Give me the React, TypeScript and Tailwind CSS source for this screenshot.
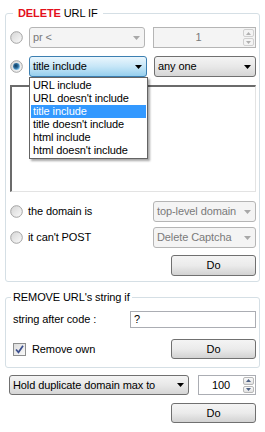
import React from 'react';

type Kind = 'normal' | 'disabled' | 'focus';

const Arrow = ({ gray }: { gray?: boolean }) => (
  <svg width="7" height="4" viewBox="0 0 7 4">
    <path d="M0 0 H7 L3.5 4 Z" fill={gray ? '#a8a8a8' : '#000'} />
  </svg>
);

const Select = ({ text, kind = 'normal', className = '' }: { text: string; kind?: Kind; className?: string }) => {
  const skin =
    kind === 'disabled'
      ? 'border-[#b5b5b5] bg-[#f4f4f4] text-[#7a7a7a]'
      : kind === 'focus'
        ? 'border-[#3c7fb1] bg-linear-to-b from-[#eaf6fd] via-[#c6e6f7] to-[#95cfee] text-black'
        : 'border-[#707070] bg-linear-to-b from-[#f4f4f4] via-[#e8e8e8] to-[#d6d6d6] text-black';
  return (
    <div className={`h-full flex items-center rounded-[3px] border ${skin} ${className}`}>
      <span className="flex-1 pl-[3px] truncate">{text}</span>
      <span className="w-[16px] flex justify-center">
        <Arrow gray={kind === 'disabled'} />
      </span>
    </div>
  );
};

const Tri = ({ up, gray }: { up?: boolean; gray?: boolean }) => (
  <svg width="5" height="3" viewBox="0 0 5 3">
    <path d={up ? 'M0 3 H5 L2.5 0 Z' : 'M0 0 H5 L2.5 3 Z'} fill={gray ? '#b0b0b0' : '#4d6185'} />
  </svg>
);

const Spin = ({ value, disabled, className = '' }: { value: string; disabled?: boolean; className?: string }) => (
  <div
    className={`h-full flex items-center border ${
      disabled ? 'border-[#b5b5b5] bg-[#f4f4f4] text-[#7a7a7a]' : 'border-[#abadb3] bg-white text-black'
    } ${className}`}
  >
    <span className="flex-1 text-center">{value}</span>
    <div className="w-[12px] h-full flex flex-col py-[1px] pr-[1px] gap-[1px]">
      <div
        className={`flex-1 flex items-center justify-center rounded-[2px] border ${
          disabled ? 'border-[#d0d0d0] bg-[#f4f4f4]' : 'border-[#b8b8b8] bg-linear-to-b from-[#fafafa] to-[#e2e2e2]'
        }`}
      >
        <Tri up gray={disabled} />
      </div>
      <div
        className={`flex-1 flex items-center justify-center rounded-[2px] border ${
          disabled ? 'border-[#d0d0d0] bg-[#f4f4f4]' : 'border-[#b8b8b8] bg-linear-to-b from-[#fafafa] to-[#e2e2e2]'
        }`}
      >
        <Tri gray={disabled} />
      </div>
    </div>
  </div>
);

const Radio = ({ on }: { on?: boolean }) => (
  <svg width="13" height="13" viewBox="0 0 13 13">
    <defs>
      <linearGradient id="rg" x1="0" y1="0" x2="1" y2="1">
        <stop offset="0" stopColor="#d4d4d4" />
        <stop offset="1" stopColor="#fbfbfb" />
      </linearGradient>
      <radialGradient id="rd" cx="0.4" cy="0.4" r="0.6">
        <stop offset="0" stopColor="#0d3a5e" />
        <stop offset="0.6" stopColor="#2e6f9e" />
        <stop offset="1" stopColor="#7ec0ea" />
      </radialGradient>
    </defs>
    <circle cx="6.5" cy="6.5" r="5.8" fill="url(#rg)" stroke="#a3a3a3" strokeWidth="1" />
    {on && <circle cx="6.5" cy="6.5" r="3.4" fill="url(#rd)" />}
  </svg>
);

const Check = () => (
  <svg width="13" height="13" viewBox="0 0 13 13">
    <defs>
      <linearGradient id="cg" x1="0" y1="0" x2="1" y2="1">
        <stop offset="0" stopColor="#dcdcdc" />
        <stop offset="1" stopColor="#fafafa" />
      </linearGradient>
    </defs>
    <rect x="0.5" y="0.5" width="12" height="12" fill="url(#cg)" stroke="#8e8f8f" />
    <path d="M3 6.5 L5.5 9.3 L10 2.8" fill="none" stroke="#3b4f8e" strokeWidth="1.7" />
  </svg>
);

const Btn = ({ className = '' }: { className?: string }) => (
  <div
    className={`w-[85px] flex items-center justify-center rounded-[3px] border border-[#707070] bg-linear-to-b from-[#f4f4f4] via-[#ebebeb] to-[#d2d2d2] ${className}`}
  >
    Do
  </div>
);

const options = ['URL include', "URL doesn't include", 'title include', "title doesn't include", 'html include', "html doesn't include"];

export default function App() {
  return (
    <div className="w-[265px] h-[432px] bg-white px-[5px] text-[11px] text-black tracking-[-0.1px] font-['Liberation_Sans',Arial,sans-serif] overflow-hidden">
      <fieldset className="mt-[6px] border border-[#d5dfe5] rounded-[3px] px-[3px] pb-[5px]">
        <legend className="ml-[4px] px-[5px] leading-[14px]">
          <span className="font-bold text-[#e3101b]">DELETE</span> URL IF
        </legend>

        <div className="mt-[7px] h-[21px] flex items-center">
          <div className="w-[20px] pl-[1px] flex">
            <Radio />
          </div>
          <Select text="pr <" kind="disabled" className="w-[116px]" />
          <Spin value="1" disabled className="ml-[8px] w-[103px]" />
        </div>

        <div className="relative mt-[8px] h-[21px] flex items-center">
          <div className="w-[20px] pl-[1px] flex">
            <Radio on />
          </div>
          <Select text="title include" kind="focus" className="w-[118px]" />
          <Select text="any one" className="ml-[7px] flex-1" />
          <ul className="absolute top-[21px] left-[20px] w-[119px] border border-[#646464] bg-white p-[1px] shadow-[2px_2px_2px_rgba(0,0,0,0.35)] z-10">
            {options.map((o) => (
              <li
                key={o}
                className={`h-[13px] leading-[13px] pl-[2px] ${o === 'title include' ? 'bg-[#3399ff] text-white' : ''}`}
              >
                {o}
              </li>
            ))}
          </ul>
        </div>

        <div className="mt-[8px] ml-[1px] h-[107px] border-t-2 border-l-2 border-r border-b border-t-[#6b6b6b] border-l-[#6b6b6b] border-r-[#e3e3e3] border-b-[#e3e3e3]" />

        <div className="mt-[9px] h-[21px] flex items-center">
          <div className="w-[19px] pl-[1px] flex">
            <Radio />
          </div>
          <span className="flex-1">the domain is</span>
          <Select text="top-level domain" kind="disabled" className="w-[103px]" />
        </div>

        <div className="mt-[5px] h-[21px] flex items-center">
          <div className="w-[19px] pl-[1px] flex">
            <Radio />
          </div>
          <span className="flex-1">it can't POST</span>
          <Select text="Delete Captcha" kind="disabled" className="w-[103px]" />
        </div>

        <div className="mt-[7px] flex justify-end">
          <Btn className="h-[21px]" />
        </div>
      </fieldset>

      <fieldset className="mt-[8px] border border-[#d5dfe5] rounded-[3px] px-[3px] pb-[8px]">
        <legend className="ml-[2px] px-[2px] leading-[14px]">REMOVE URL's string if</legend>

        <div className="mt-[7px] h-[17px] flex items-center pl-[4px]">
          <span className="flex-1">string after code :</span>
          <div className="w-[126px] h-full border border-[#abadb3] flex items-center pl-[3px]">?</div>
        </div>

        <div className="mt-[11px] h-[20px] flex items-center pl-[4px]">
          <Check />
          <span className="ml-[6px] flex-1">Remove own</span>
          <Btn className="h-[20px]" />
        </div>
      </fieldset>

      <div className="mt-[7px] h-[20px] flex items-center pl-[4px] pr-[4px]">
        <Select text="Hold duplicate domain max to" className="w-[180px]" />
        <Spin value="100" className="ml-[9px] flex-1" />
      </div>

      <div className="mt-[8px] flex justify-end pr-[4px]">
        <Btn className="h-[20px]" />
      </div>
    </div>
  );
}
